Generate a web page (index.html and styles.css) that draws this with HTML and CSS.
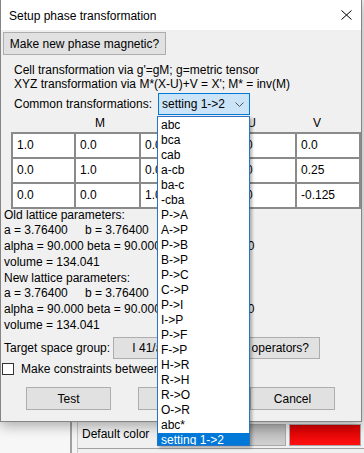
FILE: index.html
```html
<!DOCTYPE html>
<html>
<head>
<meta charset="utf-8">
<link rel="stylesheet" href="styles.css">
</head>
<body>
<div class="dialog">
  <div class="titlebar">
    <span class="title">Setup phase transformation</span>
    <svg class="close" width="11" height="10" viewBox="0 0 11 10"><path d="M0.5 0.5 L10.5 9.5 M10.5 0.5 L0.5 9.5" stroke="#000" stroke-width="1" fill="none"/></svg>
  </div>
  <div class="content">
    <button class="btn magnetic">Make new phase magnetic?</button>
    <p class="info">Cell transformation via g'=gM; g=metric tensor<br>XYZ transformation via M*(X-U)+V = X'; M* = inv(M)</p>
    <div class="common">
      <span class="common-label">Common transformations:</span>
      <div class="select">
        <span>setting 1-&gt;2</span>
        <svg class="chev" width="9" height="5" viewBox="0 0 9 5"><path d="M0.5 0.5 L4.5 4.5 L8.5 0.5" stroke="#555" stroke-width="1" fill="none"/></svg>
      </div>
    </div>
    <div class="heads">
      <span class="h-m">M</span>
      <span class="h-u">U</span>
      <span class="h-v">V</span>
    </div>
    <div class="grids">
      <div class="grid grid-m">
        <div class="cell">1.0</div><div class="cell">0.0</div><div class="cell">0.0</div>
        <div class="cell">0.0</div><div class="cell">1.0</div><div class="cell">0.0</div>
        <div class="cell">0.0</div><div class="cell">0.0</div><div class="cell">1.0</div>
      </div>
      <div class="grid grid-uv">
        <div class="cell">0.0</div><div class="cell">0.0</div>
        <div class="cell">0.0</div><div class="cell">0.25</div>
        <div class="cell">0.0</div><div class="cell">-0.125</div>
      </div>
    </div>
    <div class="params">
      <div>Old lattice parameters:</div>
      <div><span class="pa">a = 3.76400</span>b = 3.76400</div>
      <div>alpha = 90.000 beta = 90.000 gamma = 90.000</div>
      <div>volume = 134.041</div>
      <div>New lattice parameters:</div>
      <div><span class="pa">a = 3.76400</span>b = 3.76400</div>
      <div>alpha = 90.000 beta = 90.000 gamma = 90.000</div>
      <div>volume = 134.041</div>
    </div>
    <div class="target">
      <span class="target-label">Target space group:</span>
      <button class="btn sg">I 41/a m d</button>
      <button class="btn symops">Apply symmetry operators?</button>
    </div>
    <label class="check"><span class="box"></span>Make constraints between phases?</label>
    <div class="actions">
      <button class="btn act">Test</button>
      <button class="btn act">OK</button>
      <button class="btn act">Cancel</button>
    </div>
  </div>
</div>
<div class="desk">
  <div class="desk-left"></div>
  <div class="vline dark"></div>
  <div class="desk-strip"></div>
  <div class="vline light"></div>
  <div class="panel">
    <span class="panel-label">Default color</span>
    <span class="swatch gray"></span>
    <span class="swatch red"></span>
  </div>
</div>
<ul class="dropdown">
  <li>abc</li><li>bca</li><li>cab</li><li>a-cb</li><li>ba-c</li><li>-cba</li>
  <li>P-&gt;A</li><li>A-&gt;P</li><li>P-&gt;B</li><li>B-&gt;P</li><li>P-&gt;C</li><li>C-&gt;P</li>
  <li>P-&gt;I</li><li>I-&gt;P</li><li>P-&gt;F</li><li>F-&gt;P</li><li>H-&gt;R</li><li>R-&gt;H</li>
  <li>R-&gt;O</li><li>O-&gt;R</li><li>abc*</li><li class="sel">setting 1-&gt;2</li>
</ul>
</body>
</html>
```
FILE: styles.css
```css
html, body {
  margin: 0;
  padding: 0;
}
body {
  width: 364px;
  height: 453px;
  overflow: hidden;
  position: relative;
  background: #f0f0f0;
  font-family: "Liberation Sans", Arial, sans-serif;
  font-size: 12px;
  color: #000;
}
.dialog {
  position: relative;
  z-index: 1;
  width: 362px;
  height: 422px;
  box-sizing: border-box;
  border: 1px solid #858585;
  border-top: none;
  background: #f0f0f0;
  box-shadow: 0 4px 12px rgba(0, 0, 0, 0.3);
  display: flex;
  flex-direction: column;
}
.titlebar {
  height: 30px;
  box-sizing: border-box;
  padding: 2px 9px 0 8px;
  background: #fff;
  display: flex;
  align-items: center;
  justify-content: space-between;
  flex: none;
}
.close {
  margin-top: -2px;
}
.content {
  display: flex;
  flex-direction: column;
  align-items: flex-start;
}
.btn {
  font: inherit;
  color: #000;
  background: #e1e1e1;
  border: 1px solid #adadad;
  box-sizing: border-box;
  padding: 0;
  margin: 0;
}
.magnetic {
  margin: 2px 0 0 2px;
  width: 163px;
  height: 23px;
}
.info {
  margin: 8px 0 0 13px;
  line-height: 14px;
}
.common {
  margin: 2px 0 0 13px;
  display: flex;
  align-items: center;
  height: 22px;
}
.common-label {
  width: 144px;
}
.select {
  width: 92px;
  height: 22px;
  box-sizing: border-box;
  border: 1px solid #0078d7;
  background: #cce4f7;
  display: flex;
  align-items: center;
  justify-content: space-between;
  padding: 0 5px 0 3px;
}
.chev {
  margin-top: 1px;
}
.heads {
  display: flex;
  height: 17px;
  line-height: 17px;
}
.heads span {
  text-align: center;
  box-sizing: border-box;
}
.h-m {
  width: 196px;
  margin-left: 10px;
  padding-right: 18px;
}
.h-u {
  width: 65px;
  margin-left: 23px;
  padding-right: 22px;
}
.h-v {
  width: 66px;
  padding-right: 22px;
}
.grids {
  display: flex;
  margin-left: 10px;
}
.grid {
  display: grid;
  background: #8a8a8a;
  padding: 2px;
  gap: 2px;
  grid-auto-rows: 23px;
}
.grid-m {
  grid-template-columns: 61px 63px 64px;
}
.grid-uv {
  margin-left: 23px;
  grid-template-columns: 63px 62px;
}
.cell {
  background: #fff;
  padding-left: 4px;
  line-height: 23px;
  white-space: nowrap;
  overflow: hidden;
}
.params {
  margin: -1.5px 0 0 3px;
  line-height: 15.75px;
  white-space: nowrap;
}
.pa {
  display: inline-block;
  width: 81px;
}
.target {
  margin: 3.5px 0 0 3px;
  display: flex;
  align-items: center;
  height: 22px;
}
.target-label {
  width: 109px;
}
.sg {
  width: 92px;
  height: 22px;
}
.symops {
  margin-left: 4px;
  width: 111px;
  height: 22px;
  display: flex;
  align-items: center;
  justify-content: flex-end;
  padding-right: 10px;
  overflow: hidden;
  white-space: nowrap;
}
.check {
  margin: 2px 0 0 1px;
  height: 16px;
  display: flex;
  align-items: center;
}
.box {
  width: 12px;
  height: 12px;
  box-sizing: border-box;
  border: 1px solid #333;
  background: #fff;
  margin-right: 7px;
}
.actions {
  margin: 10px 0 0 25px;
  display: flex;
  gap: 27px;
}
.act {
  width: 85px;
  height: 23px;
}
.desk {
  display: flex;
  height: 31px;
}
.desk-left {
  width: 70px;
  background: #f7f7f7;
}
.vline {
  flex: none;
}
.vline.dark {
  width: 2px;
  background: #a0a0a0;
}
.vline.light {
  width: 1px;
  background: #c8c8c8;
}
.desk-strip {
  width: 5px;
  background: #f4f4f4;
}
.panel {
  flex: 1;
  display: flex;
  align-items: flex-start;
  padding-top: 2px;
  box-sizing: border-box;
  border-bottom: 1px solid #a0a0a0;
  height: 27px;
}
.panel-label {
  width: 166px;
  padding-left: 4px;
  line-height: 20px;
  box-sizing: border-box;
}
.swatch {
  height: 22px;
  box-sizing: border-box;
  border: 1px solid #a8a8a8;
  flex: none;
}
.swatch.gray {
  width: 42px;
  background: linear-gradient(#b2b2b2, #d0d0d0);
}
.swatch.red {
  width: 72px;
  margin-left: 3px;
  background: linear-gradient(#d40000, #ff1010);
}
.dropdown {
  position: absolute;
  z-index: 2;
  left: 157px;
  top: 116px;
  width: 93px;
  height: 330px;
  box-sizing: border-box;
  margin: 0;
  padding: 1px 0 0 0;
  list-style: none;
  background: #fff;
  border: 1px solid #2b73c4;
  box-shadow: 2px 2px 3px rgba(0, 0, 0, 0.3);
  overflow: hidden;
}
.dropdown li {
  height: 15px;
  line-height: 15px;
  padding-left: 3px;
  white-space: nowrap;
}
.dropdown li.sel {
  background: #0078d7;
  color: #fff;
}
```
